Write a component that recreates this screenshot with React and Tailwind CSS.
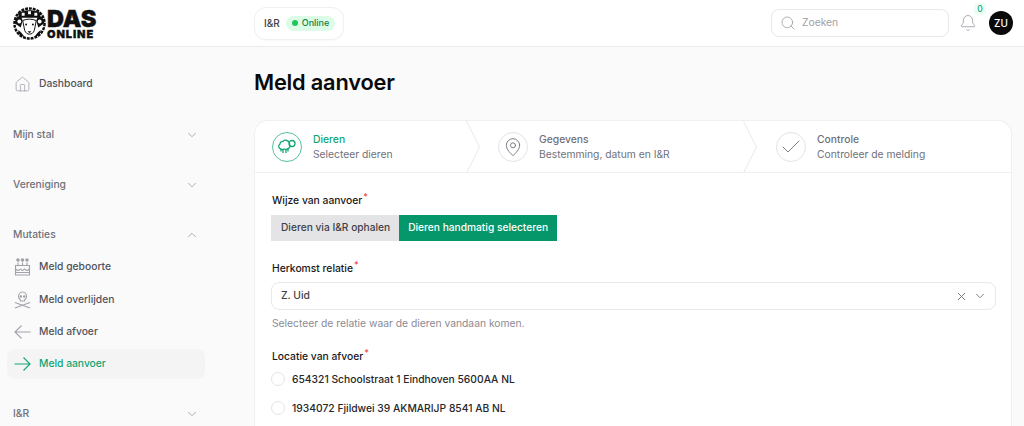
import React from "react";
import { ChevronDown, ChevronUp, Search, Bell, X, Check, MapPin, Home } from "lucide-react";

const Cake = () => (
  <svg width="17" height="18" viewBox="0 0 17 18" fill="none" stroke="currentColor" strokeWidth="1.100">
    <path d="M1.500 7.500h14v9.500h-14zM1.500 11c1.700 1.800 3.500 1.800 5 0 1.500 1.800 2.500 1.800 4 0 1.500 1.800 3.300 1.800 5 0M4 4.500v3M8.500 4.500v3M13 4.500v3M1.500 14.500h14" />
    <circle cx="4" cy="2" r="1.200" fill="currentColor" />
    <circle cx="8.500" cy="2" r="1.200" fill="currentColor" />
    <circle cx="13" cy="2" r="1.200" fill="currentColor" />
  </svg>
);
const Skull = () => (
  <svg width="17" height="19" viewBox="0 0 17 19" fill="none" stroke="currentColor" strokeWidth="1.100">
    <path d="M4.500 5.500a4 4.500 0 1 1 8 0c0 2-1 3-2 3.500v1h-4v-1c-1-.5-2-1.500-2-3.500z" />
    <circle cx="6.800" cy="5.500" r=".7" fill="currentColor" />
    <circle cx="10.200" cy="5.500" r=".7" fill="currentColor" />
    <path d="M1 11.500l15 5.500M16 11.500l-15 5.500" />
  </svg>
);
const ArrowL = () => (
  <svg width="17" height="14" viewBox="0 0 17 14" fill="none" stroke="currentColor" strokeWidth="1.100">
    <path d="M16.500 7H1M7.500.5L1 7l6.500 6.500" />
  </svg>
);
const ArrowR = () => (
  <svg width="17" height="14" viewBox="0 0 17 14" fill="none" stroke="currentColor" strokeWidth="1.100">
    <path d="M.5 7H16M9.500.5L16 7l-6.500 6.500" />
  </svg>
);
const Sheep = () => (
  <svg width="20" height="16" viewBox="0 0 20 16" fill="none" stroke="#10a574" strokeWidth="1.300">
    <path d="M3 5a2.500 2.500 0 0 1 3-2.500 3 3 0 0 1 4.500-.5 2.800 2.800 0 0 1 2 3.500 2.500 2.500 0 0 1-1.500 4 3 3 0 0 1-3.500.5 3 3 0 0 1-3.500 0A2.700 2.700 0 0 1 3 5z" />
    <circle cx="15" cy="4.500" r="3" />
    <path d="M6 10.500v3.500M9 10.500v3.500M4 10v2.500M11 10v2.500" />
  </svg>
);
const Logo = () => (
  <svg width="33" height="33" viewBox="0 0 34 34" className="shrink-0">
    <circle cx="17" cy="17" r="15.500" fill="#fff" stroke="#111" strokeWidth="2.500" strokeDasharray="3 1" />
    <path d="M5 7c4-5 20-5 24 0l-2 4H7z" fill="#111" />
    <path d="M9 6h3v3H9zM15.500 4.500h3v3h-3zM22 6h3v3h-3z" fill="#fff" />
    <path d="M2 17c0-6 3-8 6-8l2 5-2 7zM32 17c0-6-3-8-6-8l-2 5 2 7z" fill="#111" />
    <circle cx="6.500" cy="15" r="2" fill="#fff" />
    <circle cx="27.500" cy="15" r="2" fill="#fff" />
    <path d="M10 14c4-2 10-2 14 0l-2 10c-1 3-3 4-5 4s-4-1-5-4z" fill="#fff" stroke="#111" strokeWidth="1" />
    <circle cx="13.500" cy="18" r="1" fill="#111" />
    <circle cx="20.500" cy="18" r="1" fill="#111" />
    <path d="M15 25l2 2 2-2z" fill="#111" />
    <path d="M5 24c3 1 5 4 7 7l-5-2zM29 24c-3 1-5 4-7 7l5-2z" fill="#111" />
  </svg>
);

const Section = ({ label, open, className = "" }) => (
  <div className={`flex h-[30px] items-center justify-between pl-[13px] pr-[6px] text-[10.300px] font-medium text-[#71717a] ${className}`}>
    <span>{label}</span>
    {open ? <ChevronUp size={14} strokeWidth={1.500} className="text-[#a1a1aa]" /> : <ChevronDown size={14} strokeWidth={1.500} className="text-[#a1a1aa]" />}
  </div>
);

const Item = ({ icon, label, active, className = "" }) => (
  <div className={`flex h-[30px] items-center gap-[8px] rounded-lg pl-[7px] text-[10.300px] font-medium ${active ? "bg-[#f4f4f5] text-[#10a574]" : "text-[#52525b]"} ${className}`}>
    <span className={`flex w-[17px] justify-center ${active ? "text-[#10a574]" : "text-[#a1a1aa]"}`}>{icon}</span>
    <span>{label}</span>
  </div>
);

const Step = ({ icon, title, sub, active, className = "", arrow }) => (
  <div className={`relative flex h-full items-center gap-[11px] ${className}`}>
    <span className={`flex h-[30px] w-[30px] shrink-0 items-center justify-center rounded-full border ${active ? "border-[#10a574]/70" : "border-[#e4e4e7]"}`}>{icon}</span>
    <span className="flex flex-col gap-[1px] text-[10.300px] leading-[14px]">
      <span className={`font-medium ${active ? "text-[#10a574]" : "text-[#71717a]"}`}>{title}</span>
      <span className="text-[#71717a]">{sub}</span>
    </span>
    {arrow && (
      <svg className="absolute right-0 top-0" width="14" height="52" viewBox="0 0 14 52" fill="none" stroke="#e9e9ec">
        <path d="M0.500 0l13 26-13 26" />
      </svg>
    )}
  </div>
);

const Label = ({ children }) => (
  <div className="text-[10.300px] font-medium leading-[14px] text-[#18181b]">
    {children}
    <sup className="ml-[1px] text-[9px] leading-none text-[#ef4444]">*</sup>
  </div>
);

const Radio = ({ children, className = "" }) => (
  <div className={`flex items-center gap-[7px] text-[10.300px] font-medium leading-[14px] text-[#27272a] ${className}`}>
    <span className="-ml-[1px] h-[14px] w-[14px] rounded-full border border-[#e4e4e7] bg-white" />
    <span>{children}</span>
  </div>
);

export default function App() {
  return (
    <div className="flex h-[426px] w-[1024px] flex-col overflow-hidden bg-[#fafafa] font-['Inter',sans-serif]">
      <header className="flex h-[47px] shrink-0 items-center border-b border-[#ececee] bg-white">
        <div className="flex w-[254px] shrink-0 items-center pl-[13px]">
          <Logo />
          <div className="ml-[1px] mt-[3px] flex flex-col font-black text-[#111]">
            <span className="text-[23.500px] leading-[18px] [-webkit-text-stroke:0.400px_#111]">DAS</span>
            <span className="mt-[1px] text-[11px] leading-[10px] tracking-[0.900px] [-webkit-text-stroke:0.300px_#111]">ONLINE</span>
          </div>
        </div>
        <div className="flex h-[33px] items-center gap-[6px] rounded-xl border border-[#f0f0f2] bg-white pl-[9px] pr-[8px] text-[10px] font-medium text-[#3f3f46] shadow-[0_1px_2px_rgba(0,0,0,0.03)]">
          <span>I&amp;R</span>
          <span className="flex h-[15px] items-center gap-[4px] rounded-full bg-[#dcfce7] px-[6px] text-[9px] text-[#15803d]">
            <span className="h-[6px] w-[6px] rounded-full bg-[#22c55e]" />
            Online
          </span>
        </div>
        <div className="ml-auto flex items-center pr-[11px]">
          <div className="flex h-[28px] w-[178px] items-center gap-[6px] rounded-lg border border-[#e9e9ec] bg-white pl-[8px] text-[10.300px] text-[#a1a1aa]">
            <Search size={16} strokeWidth={1.300} />
            <span>Zoeken</span>
          </div>
          <div className="relative ml-[10px] mr-[12px] flex">
            <Bell size={18} strokeWidth={1.200} className="text-[#a1a1aa]" />
            <span className="absolute left-[15px] top-[-11px] flex h-[12px] w-[12px] items-center justify-center rounded-[4px] bg-[#ecfdf5] text-[8.500px] font-medium text-[#10a574]">0</span>
          </div>
          <div className="flex h-[24px] w-[24px] items-center justify-center rounded-full bg-[#0a0a0a] text-[10px] font-medium text-white">ZU</div>
        </div>
      </header>
      <div className="flex min-h-0 flex-1">
        <aside className="ml-[7px] w-[198px] shrink-0 pt-[22px]">
          <Item icon={<Home size={21} strokeWidth={1.100} />} label="Dashboard" />
          <Section label="Mijn stal" className="-ml-[7px] mt-[21px]" />
          <Section label="Vereniging" className="-ml-[7px] mt-[20px]" />
          <Section label="Mutaties" open className="-ml-[7px] mt-[20px]" />
          <Item icon={<Cake />} label="Meld geboorte" className="mt-[2px]" />
          <Item icon={<Skull />} label="Meld overlijden" className="mt-[3px]" />
          <Item icon={<ArrowL />} label="Meld afvoer" className="mt-[2px]" />
          <Item icon={<ArrowR />} label="Meld aanvoer" active className="mt-[2px]" />
          <Section label="I&R" className="-ml-[7px] mt-[20px]" />
        </aside>
        <main className="ml-[49px] mr-[12px] flex min-w-0 flex-1 flex-col">
          <h1 className="mt-[21px] text-[21.800px] font-semibold leading-[28px] tracking-[-0.200px] text-[#0a0a0a]">Meld aanvoer</h1>
          <div className="mt-[24px] flex-1 rounded-t-[14px] border border-b-0 border-[#f0f0f2] bg-white">
            <div className="flex h-[52px] items-center border-b border-[#f0f0f2]">
              <Step active arrow className="w-[225px] pl-[17px]" title="Dieren" sub="Selecteer dieren" icon={<Sheep />} />
              <Step arrow className="w-[277px] pl-[18px]" title="Gegevens" sub="Bestemming, datum en I&R" icon={<MapPin size={20} strokeWidth={1.100} className="text-[#71717a]" />} />
              <Step className="pl-[19px]" title="Controle" sub="Controleer de melding" icon={<Check size={24} strokeWidth={0.900} className="text-[#71717a]" />} />
            </div>
            <div className="pl-[17px] pr-[15px] pt-[20px]">
              <Label>Wijze van aanvoer</Label>
              <div className="mt-[8px] -ml-[1px] flex h-[26px] w-fit text-[10.200px] font-medium">
                <span className="flex items-center bg-[#e4e4e7] pl-[10px] pr-[9px] text-[#3f3f46]">Dieren via I&amp;R ophalen</span>
                <span className="flex items-center bg-[#059669] px-[9px] text-white">Dieren handmatig selecteren</span>
              </div>
              <div className="mt-[20px]"><Label>Herkomst relatie</Label></div>
              <div className="-ml-[1px] mt-[7px] flex h-[28px] items-center justify-between rounded-lg border border-[#e9e9ec] bg-white pl-[9px] pr-[8px] text-[10.300px] font-medium text-[#3f3f46]">
                <span>Z. Uid</span>
                <span className="flex items-center gap-[5px] text-[#71717a]">
                  <X size={13} strokeWidth={1.700} />
                  <ChevronDown size={14} strokeWidth={1.500} />
                </span>
              </div>
              <div className="mt-[6px] text-[10.300px] leading-[14px] text-[#8b8b94]">Selecteer de relatie waar de dieren vandaan komen.</div>
              <div className="mt-[19px]"><Label>Locatie van afvoer</Label></div>
              <Radio className="mt-[9px]">654321 Schoolstraat 1 Eindhoven 5600AA NL</Radio>
              <Radio className="mt-[15px]">1934072 Fjildwei 39 AKMARIJP 8541 AB NL</Radio>
            </div>
          </div>
        </main>
      </div>
    </div>
  );
}
